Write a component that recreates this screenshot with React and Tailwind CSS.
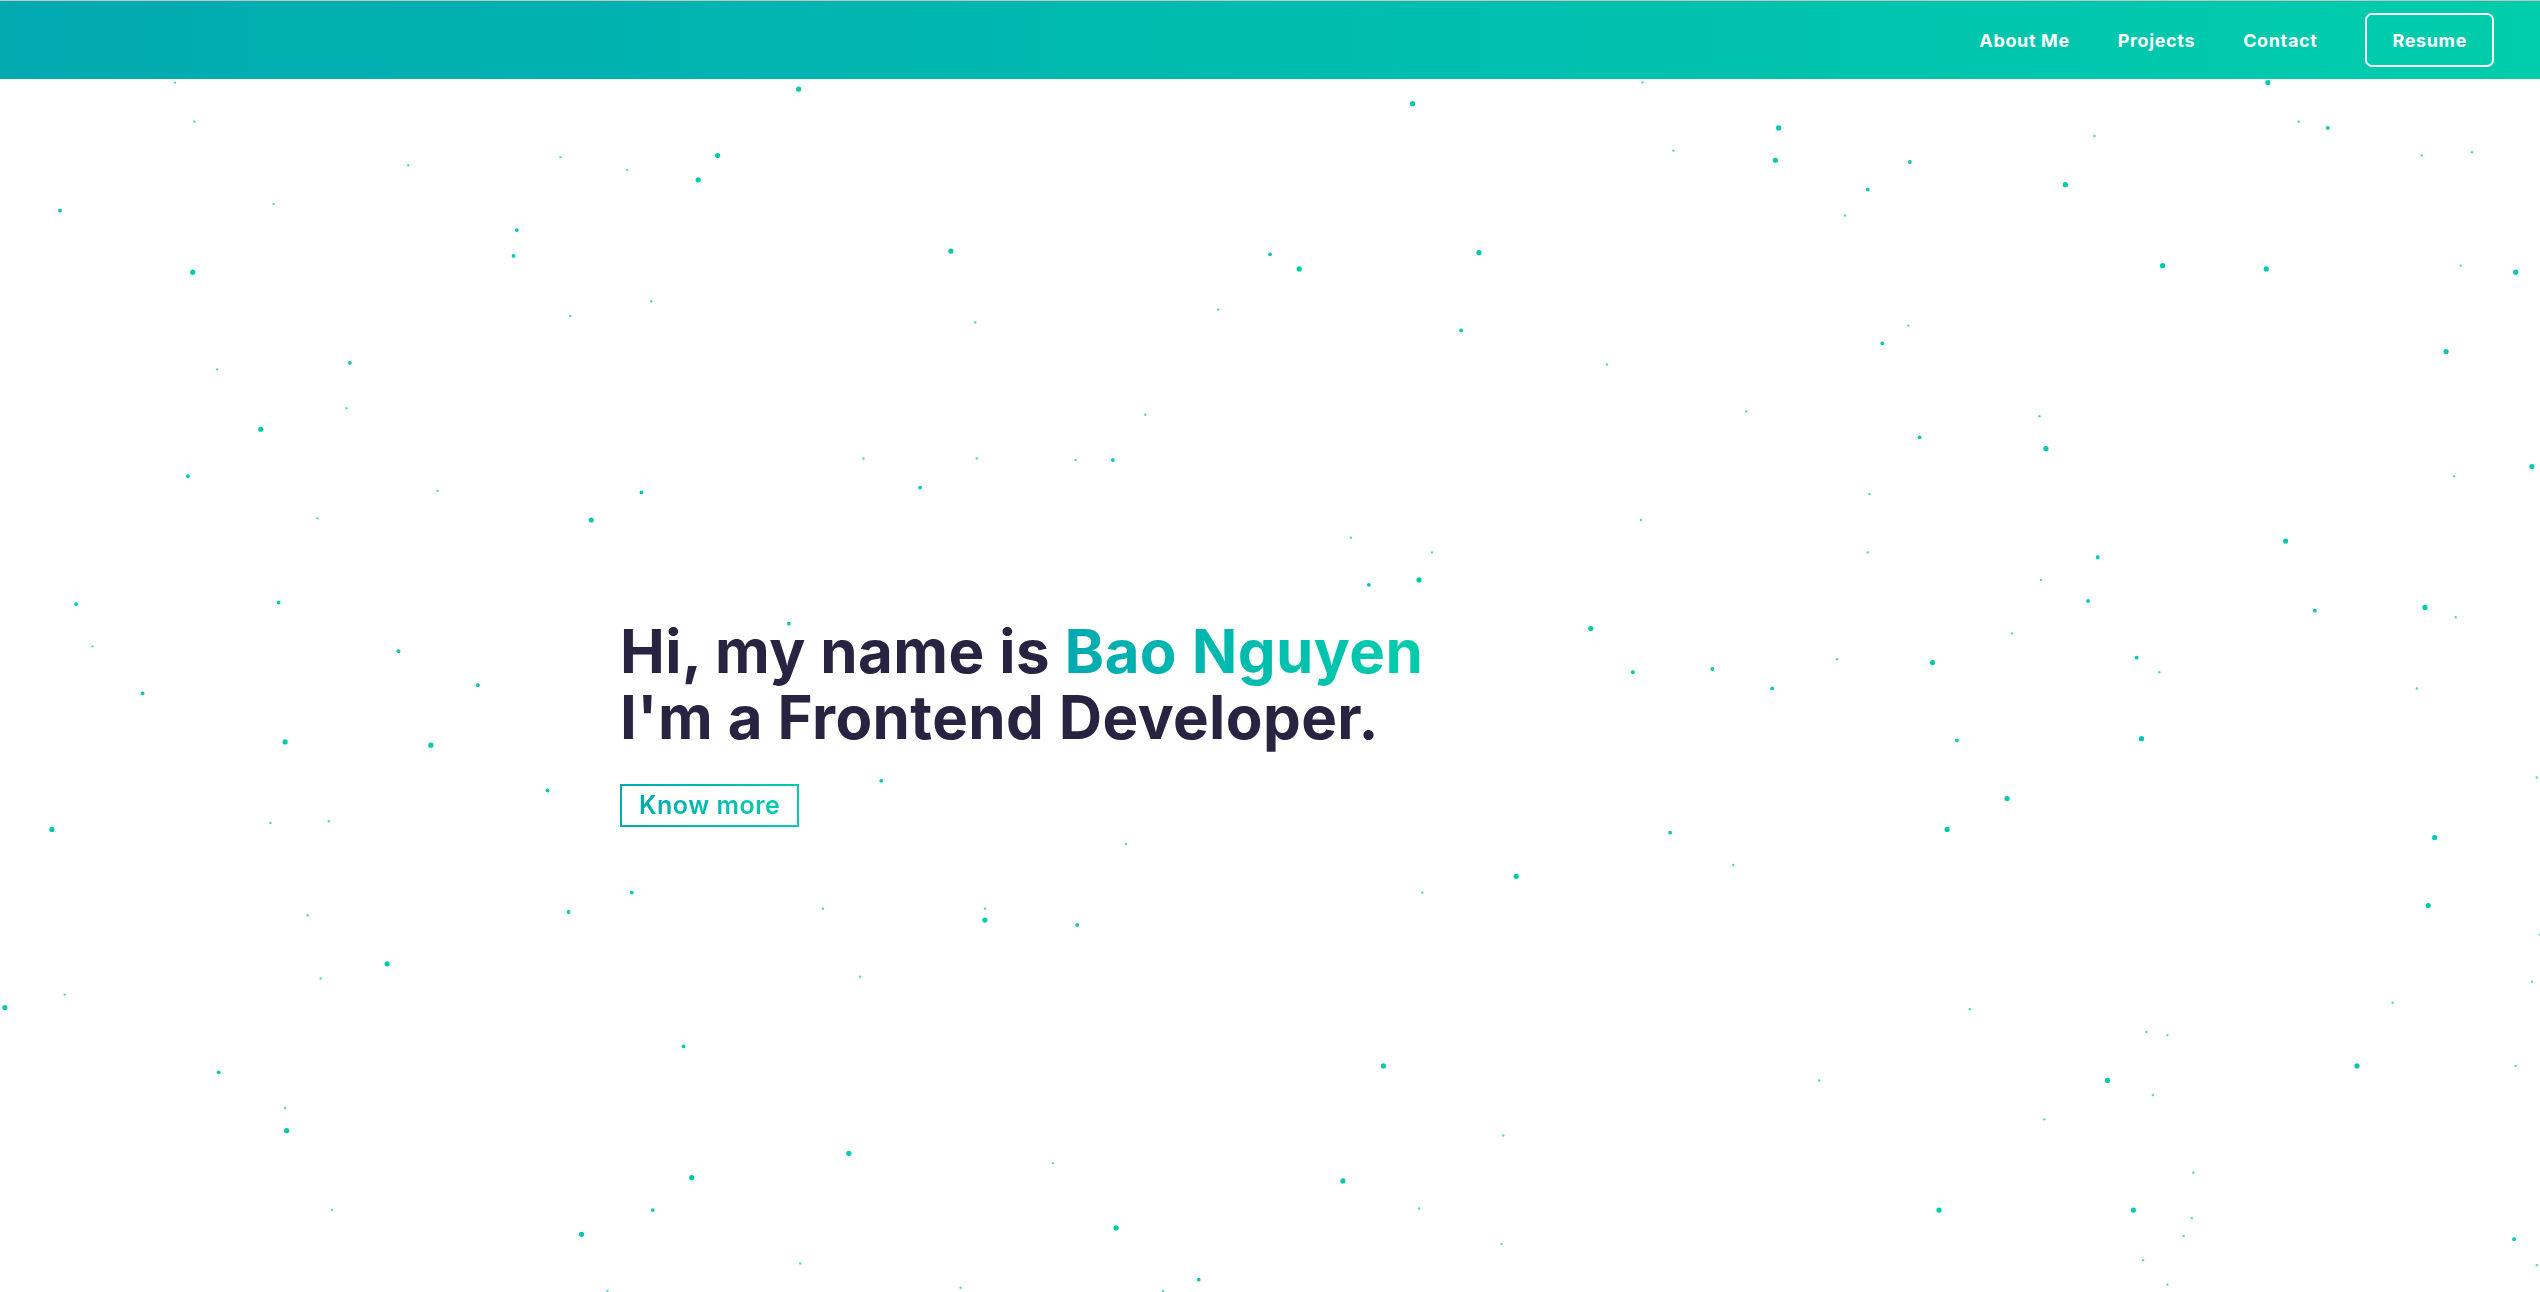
import React from "react";

const navLinks = ["About Me", "Projects", "Contact"];

// particle positions, taken from the 1568-wide preview: [x, y, size]
const dots = [
  [108, 51, 1], [120, 75, 1], [493, 55, 3], [872, 64, 3], [1098, 79, 3], [1400, 51, 3], [1419, 75, 1], [1437, 79, 2], [1014, 51, 1],
  [252, 102, 1], [346, 97, 1], [387, 105, 1], [443, 96, 3], [431, 111, 3], [37, 130, 2], [169, 126, 1], [319, 142, 2], [317, 158, 2],
  [119, 168, 3], [587, 155, 3], [784, 157, 2], [802, 166, 3], [913, 156, 3], [1033, 93, 1], [1096, 99, 3], [1153, 117, 2],
  [1179, 100, 2], [1275, 114, 3], [1293, 84, 1], [1495, 96, 1], [1526, 94, 1], [1335, 164, 3], [1399, 166, 3], [1519, 164, 1],
  [1553, 168, 3], [1139, 133, 1], [402, 186, 1], [352, 195, 1], [602, 199, 1], [752, 191, 1], [902, 204, 2], [1162, 212, 2],
  [1178, 201, 1], [1510, 217, 3], [216, 224, 2], [134, 228, 1], [214, 252, 1], [161, 265, 3], [707, 256, 1], [992, 225, 1],
  [1078, 254, 1], [1259, 257, 1], [1185, 270, 2], [1263, 277, 3], [116, 294, 2], [270, 303, 1], [396, 304, 2], [568, 301, 2],
  [533, 283, 1], [603, 283, 1], [664, 284, 1], [687, 284, 2], [1563, 288, 3], [1515, 294, 1], [196, 320, 1], [365, 321, 3],
  [1013, 321, 1], [1154, 305, 1], [834, 332, 1], [884, 341, 1], [845, 361, 2], [876, 358, 3], [1153, 341, 1], [1295, 344, 2],
  [1411, 334, 3], [47, 373, 2], [172, 372, 2], [57, 399, 1], [246, 402, 2], [295, 423, 2], [88, 428, 2], [487, 385, 2],
  [982, 388, 3], [1008, 415, 2], [1057, 413, 2], [1094, 425, 2], [1134, 407, 1], [1193, 409, 3], [1242, 391, 1], [1260, 358, 1],
  [1289, 371, 2], [1319, 406, 2], [1333, 415, 1], [1429, 377, 2], [1497, 375, 3], [1516, 381, 1], [1492, 425, 1],
  [176, 458, 3], [266, 460, 3], [1208, 457, 2], [1322, 456, 3], [338, 488, 2], [544, 482, 2], [32, 512, 3], [167, 508, 1],
  [203, 507, 1], [695, 521, 1], [1031, 514, 2], [1239, 493, 3], [1202, 512, 3], [1503, 517, 3], [1566, 480, 1],
  [390, 551, 2], [351, 563, 2], [608, 561, 1], [608, 568, 3], [665, 571, 2], [508, 561, 1], [878, 551, 1], [936, 541, 3],
  [1070, 534, 1], [1499, 559, 3], [1568, 577, 1], [190, 565, 1], [239, 595, 3], [198, 604, 1], [531, 603, 1], [3, 622, 3],
  [40, 614, 1], [1216, 623, 1], [1477, 619, 1], [1563, 606, 1], [135, 662, 2], [422, 646, 2], [854, 658, 3], [1325, 637, 1],
  [1338, 639, 1], [1301, 667, 3], [1455, 658, 3], [1553, 658, 1], [1123, 667, 1], [1329, 676, 1], [177, 698, 3], [176, 684, 1],
  [524, 712, 3], [650, 718, 1], [928, 701, 1], [1262, 691, 1], [1354, 724, 1], [205, 747, 1], [403, 747, 2], [427, 727, 3],
  [829, 729, 3], [876, 746, 1], [1197, 747, 3], [1317, 747, 3], [1348, 763, 1], [1353, 752, 1], [359, 762, 3], [689, 758, 3],
  [927, 768, 1], [494, 780, 1], [740, 790, 2], [593, 795, 1], [375, 797, 1], [718, 797, 1], [1323, 778, 1], [1338, 793, 1],
  [1552, 765, 2], [1566, 781, 1],
];

const radius = { 1: 1.2, 2: 1.9, 3: 2.6 };

function Particles() {
  const k = 2540 / 1568;
  return (
    <svg className="absolute inset-0 h-full w-full" aria-hidden="true">
      {dots.map(([x, y, s], i) => (
        <circle key={i} cx={x * k} cy={y * k - 79} r={radius[s]} fill="#00c9ae" opacity={s === 1 ? 0.7 : 1} />
      ))}
    </svg>
  );
}

export default function App() {
  return (
    <div className="min-h-screen bg-white font-['Inter','Liberation_Sans',sans-serif]">
      {/* Navbar */}
      <nav className="flex h-[79px] items-center justify-end gap-12 border-t border-[#c4c4c4] bg-linear-to-r from-[#02aab0] to-[#00cdac] pr-[46px] text-white">
        {navLinks.map((label) => (
          <a key={label} className="text-[18px] font-bold tracking-[0.035em] cursor-pointer">
            {label}
          </a>
        ))}
        <button className="h-[54px] rounded-[7px] border-2 border-white px-[25px] text-[18px] font-bold tracking-[0.035em]">
          Resume
        </button>
      </nav>

      {/* Hero */}
      <section className="relative h-[1213px] overflow-hidden">
        <Particles />
        <div className="relative mx-auto max-w-[1300px] pt-[539px]">
          <h1 className="text-[60px] font-bold leading-[66px] tracking-[0.4px] text-[#272341]">
            Hi, my name is{" "}
            <span className="bg-linear-to-r from-[#02aab0] to-[#00cdac] bg-clip-text text-transparent">Bao Nguyen</span>
            <br />
            I'm a Frontend Developer.
          </h1>
          <div className="mt-[34px] inline-block bg-linear-to-r from-[#02aab0] to-[#00cdac] p-[2px]">
            <button className="flex h-[39px] items-center bg-white px-[17px]">
              <span className="bg-linear-to-r from-[#02aab0] to-[#00cdac] bg-clip-text text-[25px] font-semibold tracking-[0.02em] text-transparent">
                Know more
              </span>
            </button>
          </div>
        </div>
      </section>
    </div>
  );
}
